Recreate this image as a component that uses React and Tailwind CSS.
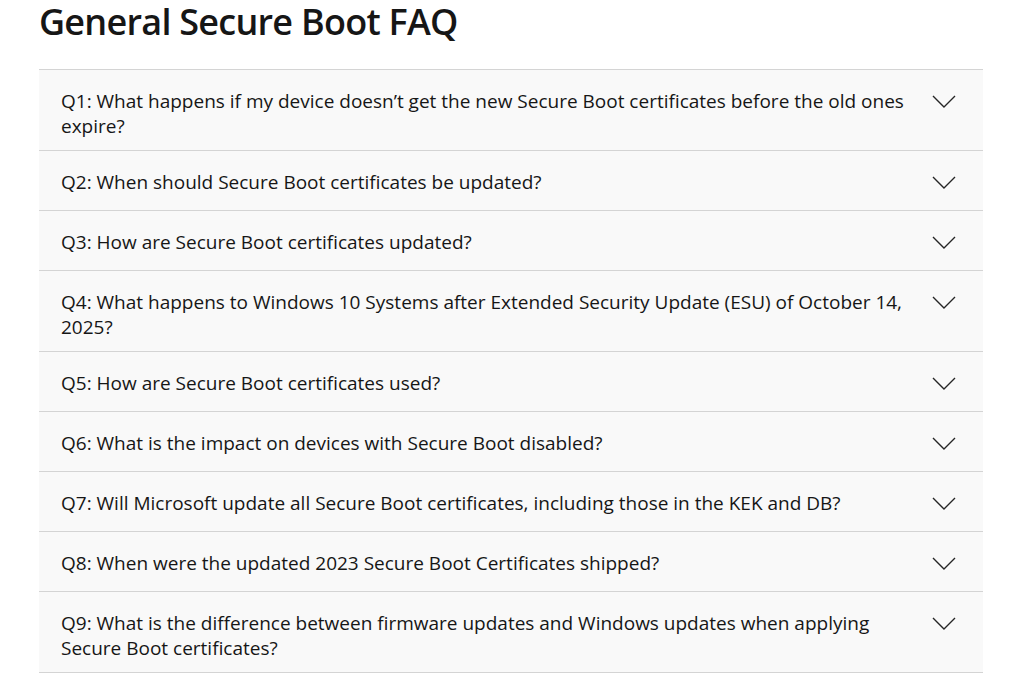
const QUESTIONS = [
  'Q1: What happens if my device doesn’t get the new Secure Boot certificates before the old ones expire?',
  'Q2: When should Secure Boot certificates be updated?',
  'Q3: How are Secure Boot certificates updated?',
  'Q4: What happens to Windows 10 Systems after Extended Security Update (ESU) of October 14, 2025?',
  'Q5: How are Secure Boot certificates used?',
  'Q6: What is the impact on devices with Secure Boot disabled?',
  'Q7: Will Microsoft update all Secure Boot certificates, including those in the KEK and DB?',
  'Q8: When were the updated 2023 Secure Boot Certificates shipped?',
  'Q9: What is the difference between firmware updates and Windows updates when applying Secure Boot certificates?',
]

function Chevron() {
  return (
    <svg width="28" height="31" viewBox="0 0 28 31" fill="none" className="shrink-0 text-[#262626]">
      <path d="M3 9 L14 20 L25 9" stroke="currentColor" strokeWidth="1.4" />
    </svg>
  )
}

export default function App() {
  return (
    <div className="min-h-[694px] bg-white px-[39px] font-['Open_Sans',sans-serif] text-[#161616]">
      <h1 className="text-[36px] font-semibold leading-[43px] tracking-[-0.75px]">General Secure Boot FAQ</h1>
      <div className="mt-[26px] border-t border-[#d4d4d4]">
        {QUESTIONS.map(q => (
          <div key={q} className="flex items-start gap-5 border-b border-[#d4d4d4] bg-[#f9f9f9] pt-[17px] pb-[11px] pl-[22px] pr-[25px]">
            <div className="mt-[2px] flex-1 text-[19px] leading-[25px]">{q}</div>
            <Chevron />
          </div>
        ))}
      </div>
    </div>
  )
}
